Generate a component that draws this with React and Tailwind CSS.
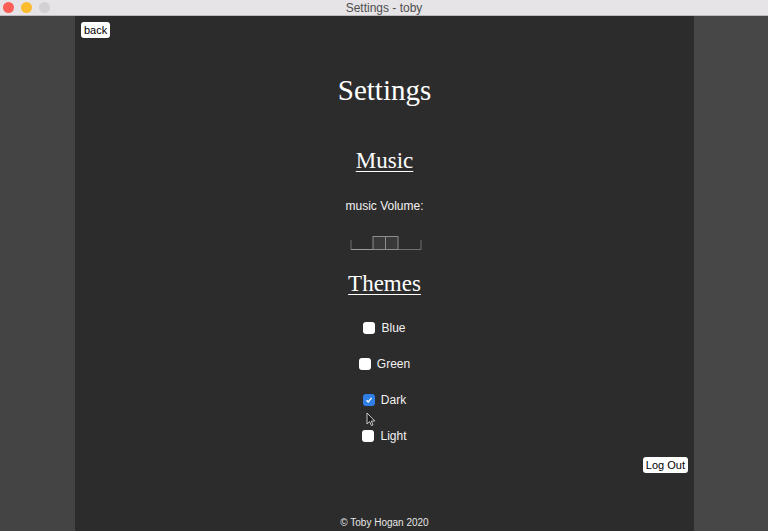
import React from "react";

const themes = [
  { name: "Blue", checked: false },
  { name: "Green", checked: false },
  { name: "Dark", checked: true },
  { name: "Light", checked: false },
];

function Checkbox({ checked }) {
  if (checked) {
    return (
      <span className="flex h-[12px] w-[12px] items-center justify-center rounded-[3px] bg-[#2f7fe6]">
        <svg width="8" height="8" viewBox="0 0 8 8">
          <path d="M1.5 4.2 L3.2 6 L6.6 1.8" fill="none" stroke="#fff" strokeWidth="1.3" />
        </svg>
      </span>
    );
  }
  return <span className="block h-[12px] w-[12px] rounded-[3px] bg-white" />;
}

function Slider() {
  return (
    <svg width="72" height="16" viewBox="0 0 72 16">
      <path d="M1 5 V14.5 H71 V5" fill="none" stroke="#6f6f6f" strokeWidth="1" />
      <rect x="23" y="1.5" width="25" height="13" fill="#3a3939" stroke="#8d8d8d" strokeWidth="1" />
      <line x1="35.5" y1="2" x2="35.5" y2="14" stroke="#8d8d8d" strokeWidth="1" />
      <line x1="1" y1="14.5" x2="23" y2="14.5" stroke="#9a9a9a" strokeWidth="1" />
    </svg>
  );
}

export default function App() {
  return (
    <div className="flex h-[531px] w-[768px] flex-col overflow-hidden bg-[#454545] font-['Liberation_Sans',Arial,sans-serif]">
      {/* title bar */}
      <div className="relative flex h-[16px] items-center justify-center border-b border-[#bdbbbd] bg-[#e6e4e6]">
        <div className="absolute left-[3px] top-[2px] flex gap-[7px]">
          <span className="block h-[11px] w-[11px] rounded-full bg-[#fc5f57]" />
          <span className="block h-[11px] w-[11px] rounded-full bg-[#fdbc2e]" />
          <span className="block h-[11px] w-[11px] rounded-full bg-[#d3d1d3]" />
        </div>
        <span className="text-[12px] leading-none text-[#4f4f4f]">Settings - toby</span>
      </div>

      <div className="flex flex-1">
        <div className="w-[75px] bg-[#444444]" />

        <div className="relative flex w-[619px] flex-col bg-[#2d2c2c] text-white">
          <div className="flex pl-[6px] pt-[6px]">
            <button className="h-[16px] rounded-[3px] bg-white px-[3px] text-[11px] leading-[16px] text-black">back</button>
          </div>

          <h1 className="mt-[36px] text-center font-['Liberation_Serif',serif] text-[29px] leading-[32px]">Settings</h1>

          <h2 className="mt-[42px] text-center font-['Liberation_Serif',serif] text-[23px] leading-[26px] underline decoration-1 underline-offset-[3px]">Music</h2>

          <p className="mt-[24px] text-center text-[12px] leading-[16px] text-[#f2f2f2]">music Volume:</p>

          <div className="mt-[21px] flex justify-center pl-[2px]">
            <Slider />
          </div>

          <h2 className="mt-[20px] text-center font-['Liberation_Serif',serif] text-[23px] leading-[26px] underline decoration-1 underline-offset-[3px]">Themes</h2>

          <div className="mt-[23px] flex flex-col items-center gap-[20px]">
            {themes.map((t) => (
              <label key={t.name} className="flex h-[16px] items-center gap-[6px] text-[12px] text-[#f2f2f2]">
                <Checkbox checked={t.checked} />
                <span>{t.name}</span>
              </label>
            ))}
          </div>

          <div className="mt-[13px] flex justify-end pr-[6px]">
            <button className="h-[16px] rounded-[3px] bg-white px-[3px] text-[11px] leading-[16px] text-black">Log Out</button>
          </div>

          <p className="mt-auto pb-[2px] text-center text-[10px] leading-[12px] text-[#e6e6e6]">© Toby Hogan 2020</p>

          {/* mouse pointer */}
          <svg className="absolute left-[291px] top-[396px]" width="10" height="15" viewBox="0 0 10 15">
            <path d="M1 1 L1 12 L3.6 9.6 L5.4 13.6 L7 12.9 L5.3 9 L8.8 9 Z" fill="#1a1a1a" stroke="#d8d8d8" strokeWidth="0.9" />
          </svg>
        </div>

        <div className="flex-1 bg-[#474747]" />
      </div>
    </div>
  );
}
